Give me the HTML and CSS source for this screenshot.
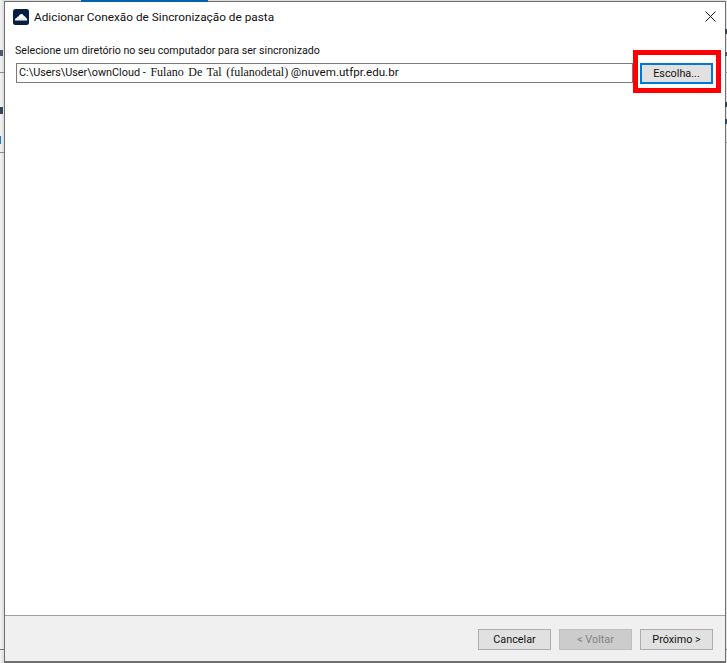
FILE: index.html
```html
<!DOCTYPE html>
<html lang="pt-BR">
<head>
<meta charset="utf-8">
<title>Adicionar Conexão de Sincronização de pasta</title>
<link rel="stylesheet" href="styles.css">
</head>
<body>
<div class="desktop">
  <span class="frag frag-top"></span>
  <span class="frag frag-l1"></span>
  <span class="frag frag-l2"></span>
  <span class="frag frag-l3"></span>
  <span class="frag frag-l4"></span>
  <span class="frag frag-l5"></span>
  <span class="frag frag-r1"></span>
  <span class="frag frag-r2"></span>
  <span class="frag frag-r3"></span>
  <span class="frag frag-r4"></span>
  <span class="frag frag-r5"></span>
  <span class="frag frag-r6"></span>
  <span class="frag frag-b1"></span>
  <span class="frag frag-b2"></span>
  <main class="window">
    <header class="titlebar">
      <svg class="app-icon" width="16" height="16" viewBox="0 0 16 16" aria-hidden="true">
        <rect width="16" height="16" rx="2.5" fill="#041e42"/>
        <path d="M1.800 11.400c0-1.300.8-2.200 1.900-2.300.2-1.100 1-1.800 2-1.700C6.200 5.900 7.200 5 8.300 5c1.300 0 2.300.9 2.600 2.200 1-.1 1.800.6 2 1.700 1 .2 1.500 1.200 1.300 2.500z" fill="#fff"/>
        <path d="M2.500 10.200l1 1.200M5 9.500l1.500 1.900M8 9.500l1.500 1.900M11 9.500l1.500 1.900" stroke="#9aa5b5" stroke-width=".6"/>
      </svg>
      <h1 class="title">Adicionar Conexão de Sincronização de pasta</h1>
      <svg class="close" width="11" height="11" viewBox="0 0 11 11" aria-hidden="true">
        <path d="M.5.500l10 10M10.500.500l-10 10" stroke="#111" stroke-width="1" fill="none"/>
      </svg>
    </header>
    <section class="content">
      <p class="label">Selecione um diretório no seu computador para ser sincronizado</p>
      <div class="picker">
        <div class="path">C:\Users\User\ownCloud - <span class="serif">Fulano De Tal (fulanodetal)</span> <span class="host">@nuvem.utfpr.edu.br</span></div>
        <div class="choose-wrap">
          <button class="btn btn-focus" type="button">Escolha...</button>
          <span class="highlight"></span>
        </div>
      </div>
    </section>
    <footer class="footer">
      <button class="btn" type="button">Cancelar</button>
      <button class="btn btn-disabled" type="button">&lt; Voltar</button>
      <button class="btn" type="button">Próximo &gt;</button>
    </footer>
  </main>
</div>
</body>
</html>
```
FILE: styles.css
```css
* { box-sizing: border-box; }
html, body { margin: 0; height: 100%; }
body { font-family: Roboto, "Noto Sans", sans-serif; font-size: 11px; color: #111; background: #fff; overflow: hidden; }

.desktop {
  position: relative;
  width: 727px;
  height: 663px;
  padding: 1px 1px 0 4px;
  background: linear-gradient(to right, #f4f4f4 0, #dcdcdc 4px, #dcdcdc 725px, #e8e8e8 727px);
  overflow: hidden;
  display: flex;
}

.frag { position: absolute; display: block; overflow: hidden; }
.frag-top { left: 81px; top: 0; width: 127px; height: 2px; background: #0063b1; z-index: 2; }
.frag-l1 { left: 0; top: 50px; width: 3px; height: 6px; background: #4a5a6e; }
.frag-l2 { left: 0; top: 72px; width: 4px; height: 1px; background: #8a8a8a; }
.frag-l3 { left: 0; top: 107px; width: 3px; height: 7px; background: #33455a; }
.frag-l4 { left: 0; top: 136px; width: 1px; height: 8px; background: #1c7ad0; }
.frag-l5 { left: 0; top: 152px; width: 4px; height: 1px; background: #8a8a8a; }
.frag-r1 { right: 0; top: 29px; width: 2px; height: 5px; background: #345; }
.frag-r2 { right: 0; top: 52px; width: 2px; height: 4px; background: #456; }
.frag-r3 { right: 0; top: 72px; width: 2px; height: 1px; background: #8a8a8a; }
.frag-r4 { right: 0; top: 102px; width: 2px; height: 5px; background: #345; }
.frag-r5 { right: 0; top: 119px; width: 2px; height: 5px; background: #345; }
.frag-r6 { right: 0; top: 142px; width: 2px; height: 1px; background: #8a8a8a; }
.frag-b1 { left: 0; top: 649px; width: 4px; height: 1px; background: #777; }
.frag-b2 { right: 0; top: 649px; width: 2px; height: 1px; background: #777; }

.window {
  flex: 1;
  display: flex;
  flex-direction: column;
  background: #fff;
  border: 1px solid #6f6f6f;
  border-width: 1px 1px 2px 1px;
}

.titlebar { display: flex; align-items: center; height: 29px; padding: 1px 0 0 8px; flex: none; }
.app-icon { flex: none; }
.title { margin: 0 0 0 5px; font-size: 11.800px; font-weight: 400; line-height: 16px; color: #111; flex: 1; white-space: nowrap; }
.close { flex: none; margin: 0 9px 2px 0; }

.content { flex: 1; padding: 12px 10px 0 10px; }
.label { margin: 0 0 4px; line-height: 16px; font-size: 10.650px; white-space: nowrap; }

.picker { display: flex; align-items: flex-start; }
.path {
  margin-left: 1px;
  width: 617px;
  height: 20px;
  border: 1px solid #7a7a7a;
  padding: 0 2px;
  line-height: 17px;
  font-size: 10.850px;
  white-space: nowrap;
  overflow: hidden;
}
.serif { font-family: "Liberation Serif", serif; font-size: 12px; word-spacing: 1.500px; margin-left: 2px; }
.host { font-size: 11.600px; }

.choose-wrap { position: relative; margin-left: 7px; }
.highlight {
  position: absolute;
  left: -7px;
  top: -13px;
  width: 88px;
  height: 43px;
  border: 5px solid #f00;
  pointer-events: none;
}

.btn {
  display: block;
  width: 73px;
  height: 21px;
  padding: 0;
  border: 1px solid #adadad;
  background: #e1e1e1;
  color: #111;
  font: 400 10.800px/17px Roboto, "Noto Sans", sans-serif;
}
.btn-focus { border: 2px solid #0078d7; }
.btn-disabled { background: #ccc; border-color: #bfbfbf; color: #838383; }

.footer {
  flex: none;
  height: 46px;
  display: flex;
  justify-content: flex-end;
  gap: 8px;
  padding: 13px 12px 0 0;
  background: #f0f0f0;
  border-top: 1px solid #a0a0a0;
}
```
